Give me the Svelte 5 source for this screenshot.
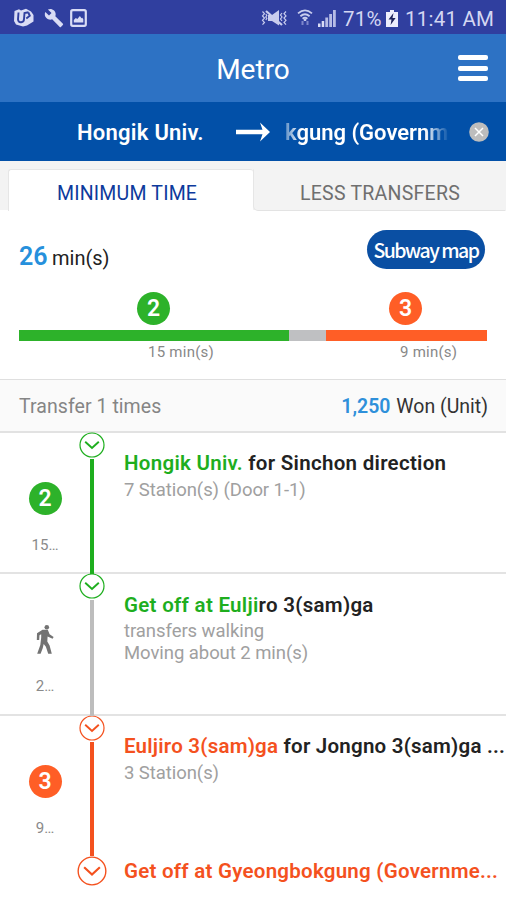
<script>
  const legs = [
    { badge: '2', time: '15…', node: 'green', line: 'green', height: 141, name: 'Hongik Univ.', rest: ' for Sinchon direction', notes: ['7 Station(s) (Door 1-1)'] },
    { badge: null, time: '2…', node: 'green', line: 'grey', height: 142, name: 'Get off at Eulji', rest: 'ro 3(sam)ga', notes: ['transfers walking', 'Moving about 2 min(s)'] },
    { badge: '3', time: '9…', node: 'orange', line: 'orange', height: 140, name: 'Euljiro 3(sam)ga', rest: ' for Jongno 3(sam)ga ...', notes: ['3 Station(s)'] }
  ];
</script>

{#snippet node(color, size)}
  <svg class="node {color}" width={size} height={size} viewBox="0 0 26 26" fill="none" stroke="currentColor">
    <circle cx="13" cy="13" r="12" stroke-width="1.2" fill="#fff" />
    <path d="M6.2 9.800 13 16 19.800 9.800" stroke-width="1.9" />
  </svg>
{/snippet}

<div class="screen">
  <div class="status">
    <div class="notices">
      <svg width="21" height="20" viewBox="0 0 21 20">
        <path d="M1.500 3 6 1.200 8 2.500 13 .8 18 3.500 20.500 7v6.500L14 17.500 10 18.500 3 16.500 1 13z" fill="#d9dcf5" />
        <path d="M5.500 4.500 5 11.500q.3 3 3.200 2.800 2.800-.3 2.800-3.300L11.500 5l4-.8M15.300 4.500l1.500 3.300-3.500 2.700" fill="none" stroke="#303f9f" stroke-width="1.900" />
      </svg>
      <svg width="20" height="20" viewBox="0 0 24 24" fill="#d9dcf5"><path d="M22.7 19l-9.1-9.1c.9-2.3.4-5-1.5-6.9-2-2-5-2.4-7.4-1.3L9 6 6 9 1.6 4.7C.4 7.1.9 10.1 2.9 12.1c1.9 1.9 4.6 2.4 6.9 1.5l9.1 9.1c.4.4 1 .4 1.4 0l2.3-2.3c.5-.4.5-1.1.1-1.4z" /></svg>
      <svg width="17" height="18" viewBox="0 0 17 18" fill="none"><rect x="1.2" y="1.2" width="14.6" height="15.6" rx="1.5" stroke="#d9dcf5" stroke-width="2.2" /><path d="M3.8 13.5V11l2-2 1.5 1 2.6-3 1.6 2.3.8-.5 1 1.5v3.2z" fill="#d9dcf5" /></svg>
    </div>
    <div class="system">
      <svg class="mute" width="27" height="18" viewBox="0 0 27 18" fill="#c9cdee">
        <path d="M7 6h4l7-5v15.5L11 12H7z" />
        <path d="M5 2 21 16" stroke="#c9cdee" stroke-width="2.2" />
        <path d="M1.5 2.5l2 2.2-2 2.2 2 2.2-2 2.2 2 2.2-2 2.2M4.8 5l1 1.5-1 1.5 1 1.5-1 1.5M21 4l-1.5 2 1.5 2-1.5 2 1.5 2M25 2.5l-2 2.2 2 2.2-2 2.2 2 2.2-2 2.2 2 2.2" fill="none" stroke="#c9cdee" stroke-width="1.2" />
      </svg>
      <svg class="wifi" width="16" height="18" viewBox="0 0 16 18" fill="none" stroke="#c9cdee" stroke-width="1.8">
        <path d="M1 4.4Q8-1.6 15 4.4M3.4 7.2Q8 3.2 12.6 7.2M5.6 9.7Q8 7.8 10.4 9.7" /><path d="M8 10v2" stroke-width="2.4" />
        <path d="M5.500 12v4M10.500 16v-4" stroke="#7d86cb" stroke-width="2" />
      </svg>
      <svg class="signal" width="18" height="18" viewBox="0 0 18 18"><path d="M0 14.5h2.500V18H0zM3.7 12h2.5v6H3.7z" fill="#d9dcf5" /><path d="M7.3 8.5h2.8V18H7.3zM11.2 5H14v13h-2.8zM15 1h2.8v17H15z" fill="#b6bce6" /></svg>
      <span class="pct">71%</span>
      <svg class="battery" width="12" height="17" viewBox="0 0 12 17"><path d="M4 0h4v2h4v15H0V2h4z" fill="#eceefc" /><path d="M7.5 3 2.5 9.6h3L4.6 15l5-7H6.5z" fill="#20265c" /></svg>
      <span class="clock">11:41 AM</span>
    </div>
  </div>

  <header>
    <h1>Metro</h1>
    <button class="menu" aria-label="Menu"><i></i><i></i><i></i></button>
  </header>

  <div class="route">
    <span class="from">Hongik Univ.</span>
    <svg class="arrow" width="34" height="20" viewBox="0 0 34 20"><path d="M0 7.700h26.500L24 0.500 34 10 24 19.500l2.500-7.200H0z" fill="#fff" /></svg>
    <div class="to"><span>kgung (Governm</span></div>
    <svg class="clear" width="20" height="20" viewBox="0 0 20 20"><circle cx="10" cy="10" r="9.800" fill="#bdbdbd" /><path d="M6 6l8 8M14 6l-8 8" stroke="#fff" stroke-width="1.5" /></svg>
  </div>

  <div class="tabs">
    <div class="tab active"><span>MINIMUM TIME</span></div>
    <div class="tab"><span>LESS TRANSFERS</span></div>
  </div>

  <section class="summary">
    <div class="top">
      <div class="total"><b>26</b><span>min(s)</span></div>
      <button class="map"><span>Subway map</span></button>
    </div>
    <div class="badges">
      <span class="badge bg-green">2</span>
      <span class="badge bg-orange">3</span>
    </div>
    <div class="bar"><i class="bg-green"></i><i class="bg-grey"></i><i class="bg-orange"></i></div>
    <div class="times"><span>15 min(s)</span><span>9 min(s)</span></div>
  </section>

  <div class="info">
    <span class="transfer">Transfer 1 times</span>
    <span class="fare"><b>1,250</b><span>Won (Unit)</span></span>
  </div>

  {#each legs as leg, i}
    <div class="leg leg{i + 1}" style="height: {leg.height}px">
      <div class="side">
        {#if leg.badge}
          <span class="badge {leg.line === 'green' ? 'bg-green' : 'bg-orange'}">{leg.badge}</span>
        {:else}
          <svg class="walk" width="18" height="33" viewBox="0 0 18 33" fill="#737373">
            <circle cx="10.800" cy="4.200" r="2.300" />
            <path d="M6.500 6.800h5.300l1.800 4.500 4 2.700-1 1.800-5-2.300-.3 5 2.300 4 2.200 8.300h-3.600l-2.300-7-2.200-2.700-1 4.200-2.100 5.500H1.200L4.300 22l.9-7.500V11.300l-1.700 1L3.200 17H.8L1 10.200z" />
          </svg>
        {/if}
        <small>{leg.time}</small>
      </div>
      <div class="rail {leg.line}">
        {@render node(leg.node, 26)}
        <i></i>
      </div>
      <div class="text">
        <p class="title"><span class={leg.node}>{leg.name}</span>{leg.rest}</p>
        {#each leg.notes as note, n}<p class="note n{n}"><span>{note}</span></p>{/each}
      </div>
    </div>
  {/each}
  <div class="last">
    {@render node('orange', 30)}
    <p class="title orange">Get off at Gyeongbokgung (Governme...</p>
  </div>
</div>

<style>
  :global(body) { margin: 0; background: #fff; }
  .screen { width: 506px; height: 900px; overflow: hidden; background: #fff; font-family: Roboto, 'Liberation Sans', sans-serif; color: #222; }
  h1, p { margin: 0; font-weight: 400; }
  button { border: 0; padding: 0; background: none; font: inherit; color: inherit; }
  svg { display: block; flex: none; }
  i { display: block; }
  span { white-space: nowrap; }
  .green { color: #1eae1e; }
  .orange { color: #f4511e; }
  .bg-green { background: #2db22a; }
  .bg-orange { background: #ff5e26; }
  .bg-grey { background: #bfc0c2; }

  .status { height: 34px; background: #303f9f; display: flex; justify-content: space-between; color: #d4d7f2; }
  .notices { display: flex; padding: 8px 0 0 13px; }
  .notices svg:nth-child(2) { margin-left: 10px; }
  .notices svg:nth-child(3) { margin: 1px 0 0 6px; }
  .system { display: flex; padding: 9px 11px 0 0; font-size: 20.500px; line-height: 20px; }
  .wifi { margin-left: 9px; }
  .signal { margin-left: 5px; }
  .pct { width: 39px; margin-left: 7px; letter-spacing: .2px; }
  .battery { margin: 1px 7px 0 4px; }
  .clock { width: 90px; letter-spacing: .22px; }

  header { height: 68px; background: #2d72c4; display: grid; grid-template-columns: 1fr auto 1fr; align-items: center; color: #fff; }
  h1 { grid-column: 2; font-size: 28px; line-height: 34px; padding-top: 3px; }
  .menu { justify-self: end; margin-right: 18px; display: grid; gap: 5.300px; }
  .menu i { width: 30px; height: 5px; border-radius: 2px; background: #fff; }

  .route { height: 59px; background: #0250a8; display: flex; align-items: center; color: #fff; font-size: 22px; font-weight: 600; }
  .from { width: 126px; margin-left: 77px; letter-spacing: .25px; padding-top: 2px; }
  .arrow { margin-left: 33px; }
  .to { width: 164px; margin-left: 15px; padding-top: 2px; overflow: hidden; -webkit-mask-image: linear-gradient(90deg, rgba(0,0,0,.35), #000 16px, #000 140px, transparent 164px); mask-image: linear-gradient(90deg, rgba(0,0,0,.35), #000 16px, #000 140px, transparent 164px); }
  .clear { margin-left: 20px; }

  .tabs { height: 50px; display: flex; box-sizing: border-box; padding: 8px 0 0 8px; background: linear-gradient(#f3f3f3 49px, #fff 49px); }
  .tab { box-sizing: border-box; height: 42px; width: 253px; font-size: 19.500px; line-height: 48px; letter-spacing: .25px; color: #6f6f6f; border: 1px solid transparent; border-bottom-color: #e3e3e3; border-left-color: #e6e6e6; border-bottom-left-radius: 5px; padding-left: 46px; }
  .tab.active { width: 245px; background: #fff; color: #0d3a9c; border: 1px solid #e6e6e6; border-bottom: 0; border-right: 0; border-radius: 3px 3px 0 0; padding-left: 48px; letter-spacing: .2px; }

  .summary { height: 168px; box-sizing: border-box; padding: 19px 19px 0; }
  .top { display: flex; justify-content: space-between; height: 39px; }
  .total { display: flex; align-items: baseline; padding-top: 10px; line-height: 34px; }
  .total b { color: #2690dc; font-size: 25px; font-weight: 600; width: 33px; }
  .total span { font-size: 20px; }
  .map { width: 118px; height: 39px; margin-right: 2px; border-radius: 20px; background: #0a4fa3; color: #fff; font: 500 19.500px 'Noto Sans CJK KR', 'Noto Sans', sans-serif; line-height: 39px; letter-spacing: -1.500px; display: flex; justify-content: center; }
  .badge { display: block; width: 33px; height: 33px; border-radius: 50%; color: #fff; font-size: 23px; line-height: 33px; text-align: center; font-weight: 600; }
  .badges { display: flex; margin-top: 23px; padding-left: 118px; gap: 219px; }
  .bar { display: flex; height: 11px; margin-top: 5px; }
  .bar i:nth-child(1) { width: 270px; }
  .bar i:nth-child(2) { width: 36.500px; }
  .bar i:nth-child(3) { flex: 1; }
  .times { display: flex; font-size: 15px; line-height: 22px; letter-spacing: .25px; color: #888; padding-left: 129px; }
  .times span:first-child { width: 252px; }

  .info { height: 54px; box-sizing: border-box; border-top: 1px solid #dfdfdf; border-bottom: 2px solid #e2e2e2; background: #fafafa; display: flex; justify-content: space-between; padding: 2px 18px 0 19px; font-size: 19.500px; line-height: 50px; color: #858585; }
  .transfer { letter-spacing: .06px; }
  .fare { color: #333; display: flex; }
  .fare b { color: #2e90da; font-weight: 600; width: 55px; }

  .leg { box-sizing: border-box; display: flex; border-bottom: 2px solid #e3e3e3; }
  .leg3 { border-bottom: 0; }
  .side { width: 79px; box-sizing: border-box; padding: 49px 0 0 11px; display: flex; flex-direction: column; align-items: center; }
  .side small { font-size: 15px; line-height: 20px; color: #8a8a8a; margin-top: 20px; }
  .rail { width: 26px; display: flex; flex-direction: column; align-items: center; }
  .rail .node { margin-top: -1px; }
  .rail i { width: 3.500px; flex: 1; margin: 1px 0 -2px; background: currentColor; z-index: 1; }
  .rail.grey { color: #bdbdbd; }
  .leg3 .rail i { margin-bottom: 0; }
  .text { flex: 1; min-width: 0; padding: 17px 0 0 19px; }
  .leg2 .text { padding-top: 18px; }
  .leg2 .note { padding-top: 2px; }
  .leg2 .n1 { padding-top: 0; }
  .title { font-size: 20.500px; line-height: 26px; font-weight: 600; letter-spacing: .29px; white-space: pre; }
  .note { font-size: 18.500px; line-height: 22px; letter-spacing: -.060px; color: #a0a0a0; padding-top: 3px; }
  .leg3 .title { letter-spacing: .23px; }
  .last { display: flex; align-items: center; padding-left: 77px; height: 30px; }
  .last .title { margin-left: 17px; letter-spacing: .25px; }
</style>
